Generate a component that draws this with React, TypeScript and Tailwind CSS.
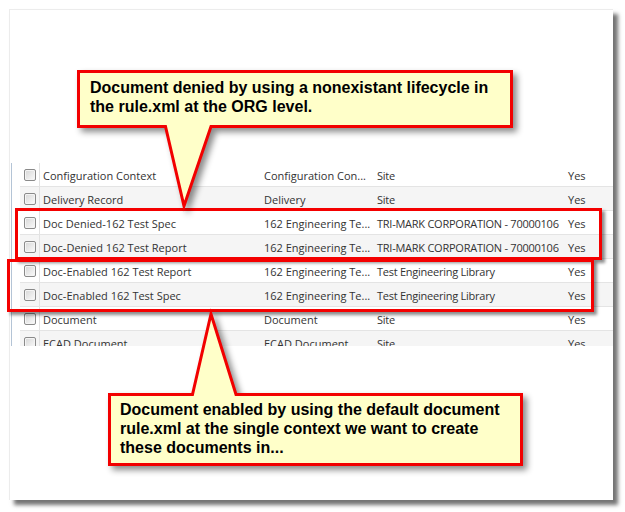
import React from "react";

type Row = { name: string; type: string; context: string; active: string };

const rows: Row[] = [
  { name: "Configuration Context", type: "Configuration Con...", context: "Site", active: "Yes" },
  { name: "Delivery Record", type: "Delivery", context: "Site", active: "Yes" },
  { name: "Doc Denied-162 Test Spec", type: "162 Engineering Te...", context: "TRI-MARK CORPORATION - 70000106", active: "Yes" },
  { name: "Doc-Denied 162 Test Report", type: "162 Engineering Te...", context: "TRI-MARK CORPORATION - 70000106", active: "Yes" },
  { name: "Doc-Enabled 162 Test Report", type: "162 Engineering Te...", context: "Test Engineering Library", active: "Yes" },
  { name: "Doc-Enabled 162 Test Spec", type: "162 Engineering Te...", context: "Test Engineering Library", active: "Yes" },
  { name: "Document", type: "Document", context: "Site", active: "Yes" },
  { name: "ECAD Document", type: "ECAD Document", context: "Site", active: "Yes" },
];

function CheckBox() {
  return (
    <div className="w-[12px] h-[12px] rounded-[2px] border border-[#8a8a8a] bg-linear-to-br from-[#d6d6d6] to-[#fbfbfb] shadow-[inset_0_0_0_1px_#f4f4f4]" />
  );
}

function TypeRow({ row, index }: { row: Row; index: number }) {
  return (
    <div
      className={`flex items-center h-[24px] shrink-0 border-b border-[#e4e4e4] ${
        index % 2 === 1 ? "bg-[#f5f5f5]" : "bg-white"
      }`}
    >
      <div className="w-[20px] h-full flex items-center justify-center border-r border-[#e2e2e2]">
        <CheckBox />
      </div>
      <div className="w-[221px] pl-[3px] pt-[3px] whitespace-nowrap overflow-hidden">{row.name}</div>
      <div className="w-[113px] pl-[3px] pt-[3px] whitespace-nowrap overflow-hidden">{row.type}</div>
      <div className="w-[191px] pl-[3px] pt-[3px] whitespace-nowrap overflow-hidden tracking-[-0.25px]">
        {row.context}
      </div>
      <div className="flex-1 pl-[3px] pt-[3px] whitespace-nowrap overflow-hidden">{row.active}</div>
    </div>
  );
}

export default function App() {
  return (
    <div className="relative w-[625px] h-[512px] bg-white overflow-hidden">
      <div className="pl-[9px] pt-[9px]">
        {/* screenshot frame */}
        <div className="w-[604px] h-[491px] bg-white border-t border-l border-[#ececec] shadow-[5px_5px_4px_rgba(0,0,0,0.55)] flex flex-col">
          <div className="h-[153px] shrink-0" />
          <div className="flex h-[183px] shrink-0">
            <div className="w-[1px]" />
            <div className="w-[1px] bg-[#b4c4d6]" />
            <div className="w-[8px]" />
            <div
              className="flex-1 flex flex-col overflow-hidden text-[11px] text-[#333333]"
              style={{ fontFamily: '"Open Sans", "Noto Sans", sans-serif' }}
            >
              {rows.map((r, i) => (
                <TypeRow key={r.name} row={r} index={i} />
              ))}
            </div>
          </div>
        </div>
      </div>

      {/* highlight boxes */}
      <div className="absolute left-[15px] top-[208px] w-[587px] h-[52px] border-[3px] border-[#f40000] shadow-[3px_3px_3px_rgba(0,0,0,0.45)]" />
      <div className="absolute left-[7px] top-[259px] w-[587px] h-[53px] border-[3px] border-[#f40000] shadow-[3px_3px_3px_rgba(0,0,0,0.45)]" />

      {/* callout balloons */}
      <svg
        className="absolute left-0 top-0 drop-shadow-[4px_4px_3px_rgba(0,0,0,0.45)]"
        width={625}
        height={512}
        viewBox="0 0 625 512"
      >
        <path
          d="M78.5,71.5 H511.5 V126.5 H211 L184,206 L165.5,126.5 H78.5 Z"
          fill="#ffffc9"
          stroke="#f20000"
          strokeWidth={3}
          strokeLinejoin="miter"
        />
        <path
          d="M109.5,394.5 H192.5 L211,314 L236,394.5 H521.5 V464.5 H109.5 Z"
          fill="#ffffc9"
          stroke="#f20000"
          strokeWidth={3}
          strokeLinejoin="miter"
        />
      </svg>

      <div
        className="absolute left-[90px] top-[78px] text-[16px] leading-[19px] font-bold text-black whitespace-nowrap"
        style={{ fontFamily: '"Liberation Sans", Arial, sans-serif' }}
      >
        <div>Document denied by using a nonexistant lifecycle in</div>
        <div>the rule.xml at the ORG level.</div>
      </div>

      <div
        className="absolute left-[120px] top-[400px] text-[16px] leading-[19px] font-bold text-black whitespace-nowrap"
        style={{ fontFamily: '"Liberation Sans", Arial, sans-serif' }}
      >
        <div>Document enabled by using the default document</div>
        <div>rule.xml at the single context we want to create</div>
        <div>these documents in...</div>
      </div>
    </div>
  );
}
